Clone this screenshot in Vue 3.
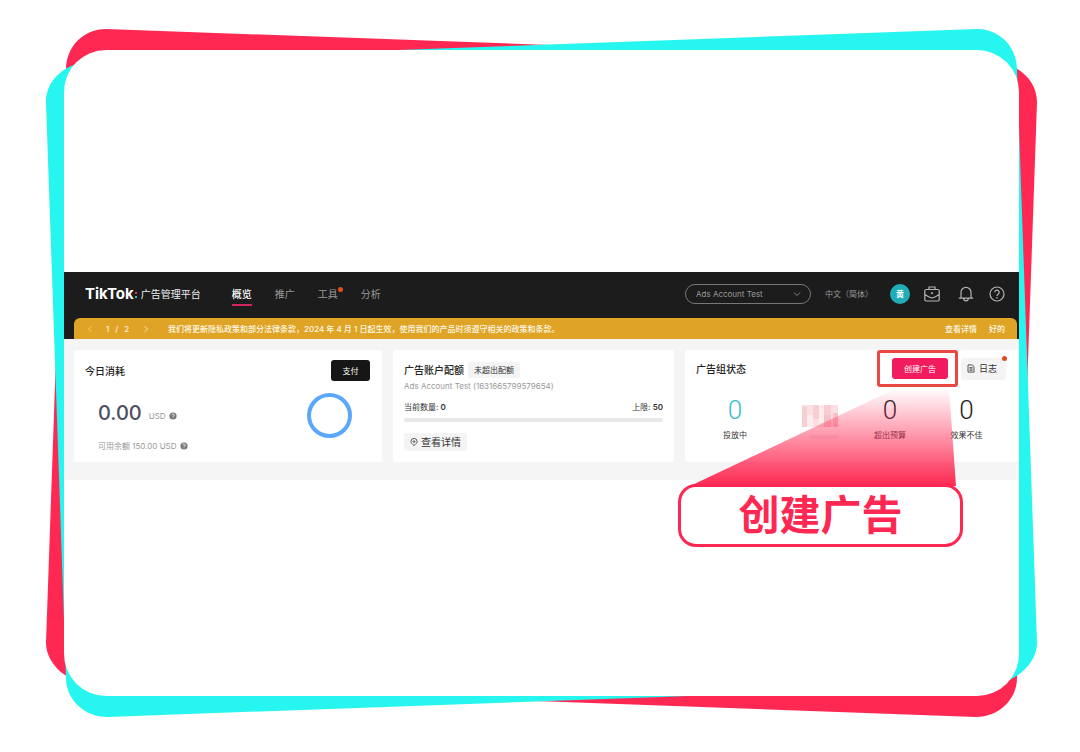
<script setup>
import { ref } from 'vue'

const account = ref('Ads Account Test')
const tabs = [
  { label: '概览', active: true },
  { label: '推广' },
  { label: '工具', dot: true },
  { label: '分析' },
]
</script>

<template>
  <main class="stage">
    <svg class="frame" viewBox="0 0 1080 752" preserveAspectRatio="none" aria-hidden="true">
      <path fill="#fe2852" d="M66 70C66 46 84 29 106 29L990 61C1015 62 1037 78 1037 102L1017 678C1017 700 998 717 976 717L93 685C70 684 46 665 46 643Z" />
      <path fill="#27f5ef" d="M1017 70C1017 46 999 29 977 29L93 61C68 62 46 78 46 102L66 678C66 700 85 717 107 717L990 685C1013 684 1037 665 1037 643Z" />
    </svg>

    <div class="panel">
      <section class="dashboard">
        <header class="topbar">
          <div class="brand">
            <strong>TikTok</strong>
            <i class="colon"></i>
            <span>广告管理平台</span>
          </div>
          <nav class="tabs">
            <a v-for="t in tabs" :key="t.label" href="#" :class="{ active: t.active, dotted: t.dot }">{{ t.label }}</a>
          </nav>
          <div class="tools">
            <label class="account">
              <select v-model="account" aria-label="广告账户">
                <option>Ads Account Test</option>
              </select>
              <svg viewBox="0 0 8 8" aria-hidden="true"><path d="M1 2.5 4 5.5 7 2.5" fill="none" stroke="#999" stroke-width=".8" /></svg>
            </label>
            <button class="lang" type="button">中文（简体）</button>
            <button class="avatar" type="button">黄</button>
            <button class="icon case" type="button" aria-label="业务中心">
              <svg viewBox="0 0 16 16" fill="none" stroke="#b4b4b4" stroke-width="1.2">
                <path d="M5 3.5V1h6v2.5M2.2 3.5h11.6a1.4 1.4 0 0 1 1.4 1.4v8.7a1.4 1.4 0 0 1-1.4 1.4H2.2a1.4 1.4 0 0 1-1.4-1.4V4.9a1.4 1.4 0 0 1 1.4-1.4ZM.8 8.5 4.600 10.800c2 1.200 4.800 1.200 6.800 0L15.200 8.500" />
                <path d="M8 6v2.200M6.900 7.100h2.200" stroke-width="1" />
              </svg>
            </button>
            <button class="icon bell" type="button" aria-label="通知">
              <svg viewBox="0 0 16 16" fill="none" stroke="#b4b4b4" stroke-width="1.2">
                <path d="M.8 12.200h14.400M3 12V6.300a5 5 0 0 1 10 0V12M5.700 12.500a2.300 2.300 0 0 0 4.600 0" />
              </svg>
            </button>
            <button class="icon" type="button" aria-label="帮助">
              <svg viewBox="0 0 16 16" fill="none" stroke="#b4b4b4" stroke-width="1.2">
                <circle cx="8" cy="8" r="7" />
                <path d="M5.800 6.300a2.200 2.200 0 1 1 3.300 1.900C8.300 8.600 8 9 8 9.900M8 11v1.400" />
              </svg>
            </button>
          </div>
        </header>

        <div class="notice-wrap">
          <div class="notice">
            <button class="arrow" type="button" aria-label="上一条">
              <svg viewBox="0 0 8 8"><path d="M5.500 1 2.500 4l3 3" fill="none" stroke="#f3d48e" stroke-width=".8" /></svg>
            </button>
            <span class="page"><span>1</span><span>/</span><span>2</span></span>
            <button class="arrow" type="button" aria-label="下一条">
              <svg viewBox="0 0 8 8"><path d="M2.500 1 5.500 4l-3 3" fill="none" stroke="#fbeac4" stroke-width=".8" /></svg>
            </button>
            <p>我们将更新隐私政策和部分法律条款，2024 年 4 月 1 日起生效，使用我们的产品时须遵守相关的政策和条款。</p>
            <a href="#">查看详情</a>
            <a href="#">好的</a>
          </div>
        </div>

        <div class="cards">
          <article class="card spend">
            <div class="row">
              <h2>今日消耗</h2>
              <button class="pay" type="button">支付</button>
            </div>
            <div class="spend-body">
              <div>
                <p class="amount">
                  <b>0.00</b><span>USD</span>
                  <svg class="q" viewBox="0 0 8 8"><circle cx="4" cy="4" r="3.6" /><path d="M2.800 3.200a1.200 1.200 0 1 1 1.800 1C4.100 4.400 4 4.600 4 5M4 5.500v.8" /></svg>
                </p>
                <p class="balance">
                  可用余额 150.00 USD
                  <svg class="q" viewBox="0 0 8 8"><circle cx="4" cy="4" r="3.6" /><path d="M2.800 3.200a1.200 1.200 0 1 1 1.800 1C4.100 4.400 4 4.600 4 5M4 5.500v.8" /></svg>
                </p>
              </div>
              <div class="ring"></div>
            </div>
          </article>

          <article class="card quota">
            <div class="quota-head">
              <h2>广告账户配额</h2>
              <span class="tag">未超出配额</span>
            </div>
            <p class="account-id">Ads Account Test (1631665799579654)</p>
            <div class="row counts">
              <span>当前数量: <b>0</b></span>
              <span>上限: <b>50</b></span>
            </div>
            <div class="bar"></div>
            <button class="soft detail" type="button">
              <svg viewBox="0 0 8 8" fill="none" stroke="#333" stroke-width=".8"><path d="M4 7.500C2 5.900.900 4.800.900 3.500a3.100 3.100 0 0 1 6.200 0C7.100 4.800 6 5.900 4 7.500Z" /><path d="M2.600 3.100 4 4.500l1.400-1.400M4 4.500V2.200" /></svg>
              查看详情
            </button>
          </article>

          <article class="card status">
            <div class="row">
              <h2>广告组状态</h2>
              <div class="actions">
                <div class="highlight"><button class="create" type="button">创建广告</button></div>
                <button class="soft log" type="button">
                  <svg viewBox="0 0 8 10" fill="none" stroke="#333" stroke-width=".9"><path d="M.700 1h4.600L7.300 3v6H.700ZM2.300 4h3.400M2.300 5.500h3.400M2.300 7h3.400" /></svg>
                  日志
                </button>
              </div>
            </div>
            <div class="stats">
              <div class="stat live"><b>0</b><span>投放中</span></div>
              <div class="stat">
                <svg class="mosaic" viewBox="0 0 36 34" shape-rendering="crispEdges" aria-hidden="true">
                  <path fill="#fbdfe2" d="M0 0h36v22H0z" />
                  <path fill="#f9ced3" d="M0 2h5v20H0zM11 0h6v14h-6zM22 0h7v10h-7z" />
                  <path fill="#f7bfc7" d="M22 10h7v12h-7zM31 8h5v14h-5z" />
                  <path fill="#fdecee" d="M5 10h6v12H5zM17 0h5v18h-5z" />
                  <path fill="#f3f1f2" d="M8 30h28v4H8z" />
                </svg>
              </div>
              <div class="stat"><b>0</b><span>超出预算</span></div>
              <div class="stat"><b>0</b><span>效果不佳</span></div>
            </div>
          </article>
        </div>

        <div class="callout">
          <svg viewBox="0 0 285 98" aria-hidden="true">
            <defs>
              <linearGradient id="beam" x1="0" y1="0" x2="0" y2="1">
                <stop offset="0" stop-color="#fe2852" stop-opacity="0" />
                <stop offset=".5" stop-color="#fe2852" stop-opacity=".5" />
                <stop offset="1" stop-color="#fe2852" />
              </linearGradient>
            </defs>
            <path fill="url(#beam)" d="M219 0h52l7 98H12Z" />
          </svg>
          <strong>创建广告</strong>
        </div>
      </section>
    </div>
  </main>
</template>

<style>
body {
  margin: 0;
  background: #fff;
}
</style>

<style scoped>
.stage {
  position: relative;
  box-sizing: border-box;
  min-height: 100vh;
  padding: 50px 61px 56px 64px;
  display: flex;
  font: 8px/12px Inter, "Noto Sans CJK SC", sans-serif;
  color: #333;
}
.stage * {
  box-sizing: border-box;
}
.frame {
  position: absolute;
  inset: 0;
  width: 100%;
  height: 100%;
}
.panel {
  position: relative;
  flex: 1;
  min-width: 0;
  padding: 222px 0 64px;
  border-radius: 42px;
  background: #fff;
}
.dashboard {
  position: relative;
}
h2,
p {
  margin: 0;
}
h2 {
  font-size: 10px;
  line-height: 16px;
  font-weight: 500;
  color: #222;
}
button {
  border: 0;
  padding: 0;
  background: none;
  font: inherit;
  color: inherit;
  white-space: nowrap;
}
a {
  color: inherit;
  text-decoration: none;
}
svg {
  display: block;
  flex: none;
}

.topbar {
  display: flex;
  align-items: center;
  height: 46px;
  padding: 0 14px 2px 21px;
  background: #1c1c1c;
  color: #999;
}
.brand {
  display: flex;
  align-items: center;
  color: #eee;
  font-size: 10px;
}
.brand strong {
  font-size: 15px;
  line-height: 16px;
  font-weight: 700;
  color: #fff;
}
.colon {
  width: 2px;
  height: 6px;
  margin: 2px 4px 0 1px;
  background: linear-gradient(#d43a5e 0 2px, transparent 2px 4px, #35b9b4 4px);
}
.tabs {
  display: flex;
  gap: 23px;
  margin-left: 31px;
  font-size: 10px;
  line-height: 20px;
}
.tabs a {
  position: relative;
}
.tabs .active {
  color: #fff;
  font-weight: 500;
}
.tabs .active::after {
  content: "";
  position: absolute;
  inset: auto 0 -2px;
  height: 2px;
  background: #d3255c;
}
.tabs .dotted::after {
  content: "";
  position: absolute;
  top: 3px;
  right: -5px;
  width: 5px;
  height: 5px;
  border-radius: 50%;
  background: #e2501e;
}
.tools {
  display: flex;
  align-items: center;
  margin-left: auto;
}
.account {
  position: relative;
  width: 126px;
  margin-right: 14px;
}
.account select {
  display: block;
  appearance: none;
  width: 100%;
  height: 20px;
  padding: 0 20px 0 10px;
  border: 1px solid #777;
  border-radius: 10px;
  background: none;
  font: inherit;
  color: #999;
}
.account svg {
  position: absolute;
  top: 6px;
  right: 10px;
  width: 8px;
  height: 8px;
}
.avatar {
  width: 20px;
  height: 20px;
  margin: 0 14px 0 17px;
  border-radius: 50%;
  background: #21adb8;
  color: #fff;
  font-weight: 700;
}
.icon svg {
  width: 16px;
  height: 16px;
}
.case {
  margin-right: 18px;
}
.bell {
  margin-right: 15px;
}

.notice-wrap {
  padding: 0 2px 0 10px;
  background: #1c1c1c;
}
.notice {
  display: flex;
  align-items: center;
  height: 21px;
  padding: 0 12px;
  border-radius: 6px 6px 0 0;
  background: #dfa326;
  color: #fff8e4;
  font-weight: 500;
}
.arrow svg {
  width: 8px;
  height: 8px;
}
.page {
  display: flex;
  gap: 6px;
  margin: 0 13px 0 12px;
  font-weight: 400;
}
.notice p {
  flex: 1;
  margin-left: 18px;
}
.notice a {
  margin-left: 12px;
}

.cards {
  display: grid;
  grid-template-columns: 308fr 281fr 334fr;
  gap: 11px;
  padding: 11px 0 18px 10px;
  background: #f5f5f5;
}
.card {
  min-height: 112px;
  border-radius: 3px;
  background: #fff;
}
.row {
  display: flex;
  align-items: center;
  justify-content: space-between;
}

.spend {
  padding: 10px 12px 0 11px;
}
.pay {
  width: 39px;
  height: 21px;
  border-radius: 3px;
  background: #161616;
  color: #fff;
}
.spend-body {
  display: flex;
  justify-content: space-between;
  padding: 12px 18px 0 13px;
}
.amount {
  display: flex;
  align-items: center;
  color: #999;
}
.amount b {
  margin-right: 7px;
  font-size: 20px;
  line-height: 40px;
  font-weight: 500;
  color: #4b4f63;
}
.amount span {
  margin-top: 6px;
}
.amount .q {
  margin-top: 6px;
}
.balance {
  display: flex;
  align-items: center;
  margin-top: 7px;
  color: #999;
}
.q {
  width: 8px;
  height: 8px;
  margin-left: 3px;
  fill: #777;
}
.q path {
  fill: none;
  stroke: #fff;
  stroke-width: .8;
}
.ring {
  width: 45px;
  height: 45px;
  border: 4px solid #5ba8fa;
  border-radius: 50%;
}

.quota {
  padding: 12px 11px 0;
}
.quota-head {
  display: flex;
  align-items: center;
  gap: 4px;
}
.tag {
  padding: 2px 6px;
  border-radius: 2px;
  background: #f4f4f4;
}
.account-id {
  margin-top: 2px;
  color: #999;
}
.counts {
  margin-top: 9px;
}
.counts b {
  font-weight: 600;
}
.bar {
  height: 4px;
  margin-top: 5px;
  border-radius: 2px;
  background: #e8e8ea;
}
.soft {
  display: flex;
  align-items: center;
  border-radius: 3px;
  background: #f4f4f4;
}
.detail {
  gap: 3px;
  height: 18px;
  margin-top: 11px;
  padding: 0 6px;
  font-size: 10px;
}
.detail svg {
  width: 8px;
  height: 8px;
}

.status {
  padding: 0 0 0 11px;
}
.status .row {
  padding-right: 13px;
}
.actions {
  display: flex;
  align-items: center;
  gap: 3px;
}
.highlight {
  padding: 5px 7px 5px 12px;
  border: 3px solid #e94843;
  border-radius: 3px;
}
.create {
  display: block;
  width: 56px;
  height: 21px;
  border-radius: 3px;
  background: #f21b5e;
  color: #fff;
}
.log {
  position: relative;
  gap: 4px;
  height: 22px;
  padding: 0 9px 0 6px;
  font-size: 9px;
}
.log svg {
  width: 8px;
  height: 9px;
}
.log::after {
  content: "";
  position: absolute;
  top: -2px;
  right: -1px;
  width: 5px;
  height: 5px;
  border-radius: 50%;
  background: #d9501e;
}
.stats {
  display: grid;
  grid-template-columns: 78fr 92fr 48fr 105fr;
  padding-top: 8px;
}
.stat {
  display: flex;
  flex-direction: column;
  align-items: center;
}
.stat b {
  font: 300 26px/30px Roboto, sans-serif;
  color: #222;
}
.stat span {
  margin-top: 4px;
}
.live b {
  color: #35bfc9;
}
.mosaic {
  width: 36px;
  height: 34px;
  margin-top: 10px;
}

.callout {
  position: absolute;
  top: 116px;
  right: 56px;
  width: 285px;
}
.callout svg {
  width: 285px;
  height: 98px;
}
.callout strong {
  display: block;
  margin-top: -2px;
  border: 3px solid #fe2852;
  border-radius: 18px;
  background: #fff;
  position: relative;
  font-size: 41px;
  line-height: 57px;
  text-align: center;
  font-weight: 700;
  color: #fe2852;
}
</style>
